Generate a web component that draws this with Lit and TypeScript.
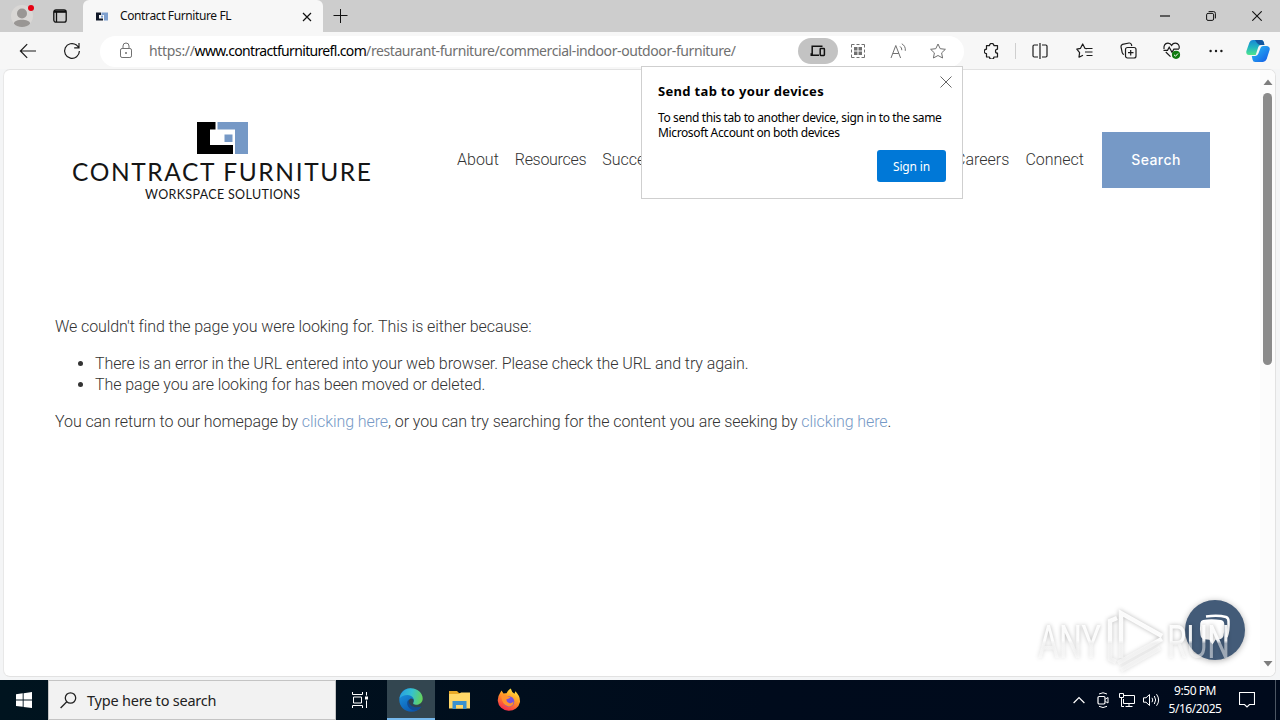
import { LitElement, html, svg, css } from 'lit';
import { customElement } from 'lit/decorators.js';

const icon = (w: number, h: number, content: unknown) => html`
   <svg width="${w}" height="${h}" viewBox="0 0 ${w} ${h}" fill="none" stroke="currentColor">${content}</svg>
`;

const closeIcon = icon(12, 12, svg`<path d="M0.5 0.5L11.5 11.5M11.5 0.5L0.5 11.5"/>`);
const starPath = 'M8 1L10.2 5.7L15.4 6.3L11.6 9.9L12.6 15L8 12.5L3.4 15L4.4 9.9L0.6 6.3L5.8 5.7Z';

@customElement('tab-strip')
export class TabStrip extends LitElement {
   static styles = css`
   :host {
      display: flex;
      height: 32px;
      background-color: #cdcdcd;
      color: #111;
      font: 12px 'Noto Sans', sans-serif;
   }
   svg {
      display: block;
      flex: none;
   }
   .profile {
      width: 83px;
      box-sizing: border-box;
      padding: 4px 0 0 11px;
      display: flex;
      gap: 18px;
   }
   .workspaces {
      margin-top: 5px;
   }
   .tab {
      width: 240px;
      box-sizing: border-box;
      padding: 0 11px 0 12px;
      display: flex;
      align-items: center;
      background-color: #f7f7f7;
      border-radius: 6px 6px 0 0;
   }
   .title {
      flex: 1;
      margin: -1px 0 0 11px;
      letter-spacing: -0.38px;
      white-space: nowrap;
   }
   .tab-close {
      display: flex;
      padding-top: 1px;
   }
   .new-tab {
      padding: 9px 0 0 10px;
      flex: 1;
   }
   .control {
      width: 46px;
      display: flex;
      align-items: center;
      justify-content: center;
   }
`;

   render() {
      return html`
         <div class="profile">
            ${icon(24, 24, svg`
               <circle cx="11" cy="12" r="11" fill="#d9d7d5" stroke="none"/>
               <circle cx="11" cy="9.5" r="5" fill="#999694" stroke="none"/>
               <path d="M3 19.5C3 14.5 19 14.5 19 19.5C17 24 5 24 3 19.5Z" fill="#999694" stroke="none"/>
               <circle cx="20" cy="4" r="3" fill="#e60012" stroke="none"/>
            `)}
            <div class="workspaces">${icon(14, 14, svg`
               <rect x="0.8" y="0.8" width="12.4" height="12.4" rx="2.2" stroke-width="1.3"/>
               <path d="M1 2.6H13" stroke-width="2.4"/>
               <path d="M3.5 3V13" stroke-width="1.3"/>
            `)}</div>
         </div>
         <div class="tab">
            ${icon(14, 9, svg`
               <path d="M1 0.5H6V3H4V6.5H8V8.5H1Z" fill="#101828" stroke="none"/>
               <path d="M6.5 0.5H13V8.5H9V3H6.5Z" fill="#7ea0cf" stroke="none"/>
               <rect x="6" y="3.6" width="2" height="2" fill="#7ea0cf" stroke="none"/>
            `)}
            <span class="title">Contract Furniture FL</span>
            <span class="tab-close">${icon(10, 10, svg`<path d="M1 1L9 9M9 1L1 9" stroke-width="1.2"/>`)}</span>
         </div>
         <div class="new-tab">${icon(15, 14, svg`<path d="M7.5 0V14M0.5 6.5H14.5"/>`)}</div>
         <div class="control">${icon(10, 2, svg`<path d="M0 1H10" stroke-width="1.2"/>`)}</div>
         <div class="control">${icon(10, 10, svg`
            <rect x="0.6" y="2.4" width="7" height="7" rx="1.4"/>
            <path d="M2.6 0.6H7.6Q9.4 0.6 9.4 2.4V7.4"/>
         `)}</div>
         <div class="control">${icon(10, 10, svg`<path d="M0.3 0.3L9.7 9.7M9.7 0.3L0.3 9.7" stroke-width="1.1"/>`)}</div>
      `;
   }
}

@customElement('address-toolbar')
export class AddressToolbar extends LitElement {
   static styles = css`
   :host {
      display: flex;
      align-items: center;
      height: 37px;
      box-sizing: border-box;
      padding-left: 6px;
      background-color: #f7f7f7;
      color: #1b1b1b;
   }
   svg {
      display: block;
   }
   .button {
      width: 44px;
      height: 30px;
      display: flex;
      align-items: center;
      justify-content: center;
      flex: none;
   }
   .address {
      width: 864px;
      height: 31px;
      margin: 1px 6px 0;
      box-sizing: border-box;
      padding: 0 6px 0 19px;
      display: flex;
      align-items: center;
      background-color: #fff;
      border-radius: 16px;
      color: #707070;
      flex: none;
   }
   .url {
      flex: 1;
      margin: -1px 0 0 16px;
      font: 14px 'Noto Sans', sans-serif;
      letter-spacing: -0.41px;
      white-space: nowrap;
   }
   .scheme {
      letter-spacing: -0.33px;
   }
   .domain {
      color: #000;
      letter-spacing: -0.66px;
   }
   .action {
      width: 40px;
      height: 26px;
      display: flex;
      align-items: center;
      justify-content: center;
      border-radius: 13px;
   }
   .action.selected {
      background-color: #c3c3c3;
      color: #111;
   }
   .divider {
      width: 1px;
      height: 16px;
      margin: 0 2px 0 1px;
      background-color: #cfcfcf;
   }
   .copilot {
      width: 40px;
   }
`;

   render() {
      return html`
         <div class="button">${icon(18, 16, svg`<path d="M17 8H1.5M8.2 1.2L1.4 8L8.2 14.8" stroke-width="1.2"/>`)}</div>
         <div class="button">${icon(18, 18, svg`
            <path d="M16.4 9A7.4 7.4 0 1 1 13.5 3.1L15.8 5.3M16 1V5.8H11.2" stroke-width="1.2"/>
         `)}</div>
         <div class="address">
            ${icon(14, 18, svg`
               <rect x="1.5" y="6.5" width="11" height="9" rx="1.6"/>
               <path d="M4 6.3V4A3 3 0 0 1 10 4V6.3"/>
               <circle cx="7" cy="11" r="1" fill="currentColor" stroke="none"/>
            `)}
            <span class="url"><span class="scheme">https://</span><span class="domain">www.contractfurniturefl.com</span>/restaurant-furniture/commercial-indoor-outdoor-furniture/</span>
            <div class="action selected">${icon(16, 12, svg`
               <path d="M12.5 1.2H2.2V9H0.5M0.5 10.2H9" stroke-width="1.5"/>
               <rect x="10.2" y="3.6" width="4.2" height="6.8" rx="0.6" stroke-width="1.5"/>
            `)}</div>
            <div class="action">${icon(16, 16, svg`
               <path d="M4.5 1.500H1.500V4.500M11.500 1.500H14.500V4.500M14.500 11.500V14.500H11.500M4.500 14.500H1.500V11.500M6.500 1.500H9.500M6.500 14.500H9.500M1.500 6.500V9.500M14.500 6.500V9.500"/>
               <path d="M4 4H7.500V7.500H4ZM8.500 4H12V7.500H8.500ZM4 8.500H7.500V12H4ZM8.500 8.500H12V12H8.500Z" fill="currentColor" stroke="none"/>
            `)}</div>
            <div class="action">${icon(17, 16, svg`
               <path d="M1 15L5.8 2.5L10.6 15M2.8 10.500H8.8"/>
               <path d="M10 3.400Q12 4.700 11.800 7.200M11.800 0.800Q15.800 3 15.300 7.800"/>
            `)}</div>
            <div class="action">${icon(16, 16, svg`<path d="${starPath}" stroke-linejoin="round"/>`)}</div>
         </div>
         <div class="button">${icon(16, 16, svg`
            <path d="M2.500 2.600H5.500A2.200 2.200 0 0 1 9.900 2.600H13.500V6.200A2 2 0 0 0 13.500 10.200V14H9.900A2.200 2.200 0 0 1 5.500 14H2.500V10.600A2.200 2.200 0 0 1 2.500 6.200Z" stroke-width="1.2" stroke-linejoin="round"/>
         `)}</div>
         <div class="divider"></div>
         <div class="button">${icon(16, 16, svg`
            <path d="M6 2H2.2Q1 2 1 3.2V12.8Q1 14 2.2 14H6M10 2H13.8Q15 2 15 3.2V12.8Q15 14 13.8 14H10M8 0V16" stroke-width="1.2"/>
         `)}</div>
         <div class="button">${icon(17, 16, svg`
            <path d="M11 5.6L8.9 5.3L6.7 1L4.5 5.3L0.8 6.2L3.6 9.6L3 14.2L7 12.2M10.5 5.5H16.5M9 9H16.5M10.5 12.5H16.5" stroke-width="1.2" stroke-linejoin="round"/>
         `)}</div>
         <div class="button">${icon(17, 17, svg`
            <rect x="5.5" y="5.5" width="10.5" height="10.5" rx="2" stroke-width="1.2"/>
            <path d="M10.7 8V13.5M8 10.7H13.5M4 12.5Q2.6 12 2.2 10.6L1 4.8Q0.8 3 2.5 2.4L9 1Q10.8 0.8 11.4 2.4L11.8 4" stroke-width="1.2"/>
         `)}</div>
         <div class="button">${icon(18, 17, svg`
            <path d="M1 7Q0.4 1.6 4.8 1.2Q7.3 1.1 8.6 3.4Q10 1.1 12.4 1.2Q16.8 1.6 16.2 6.6M2.8 10L7.5 14.6M0.5 8.3H4.5L6.2 5.3L9 10.4L10.9 7.1H16" stroke-width="1.2"/>
            <circle cx="13" cy="12.8" r="4.1" fill="#107c10" stroke="none"/>
            <path d="M11 12.8L12.5 14.2L15 11.5" stroke="#fff"/>
         `)}</div>
         <div class="button">${icon(14, 4, svg`
            <g fill="currentColor" stroke="none"><circle cx="1.6" cy="2" r="1.2"/><circle cx="7" cy="2" r="1.2"/><circle cx="12.4" cy="2" r="1.2"/></g>
         `)}</div>
         <div class="button copilot">${icon(24, 24, svg`
            <defs>
               <linearGradient id="left" x1="0" y1="0" x2="0" y2="1">
                  <stop offset="0" stop-color="#1687d5"/><stop offset="0.5" stop-color="#22b6c0"/><stop offset="1" stop-color="#4ee58c"/>
               </linearGradient>
               <linearGradient id="right" x1="0" y1="0" x2="1" y2="1">
                  <stop offset="0" stop-color="#2bc4f5"/><stop offset="1" stop-color="#1457e6"/>
               </linearGradient>
            </defs>
            <g stroke="none">
               <path d="M7 1H15Q17 1 17.7 3L18.4 6H15Q13 6 12.3 8L9.7 16H3Q-0.4 15.6 0.4 12L3.4 3.4Q4.4 1 7 1Z" fill="url(#left)"/>
               <path d="M9 1H15Q17 1 17.7 3L18.4 6H14Q11.5 5.5 9 1Z" fill="#12569f"/>
               <path d="M17 7H20.5Q24.5 7.6 23.6 11L20.7 20Q19.5 23 17 23H9.2Q7 23 6.5 20.5L5.8 17H9.2Q11.6 17 12.4 14.6L14.6 8.8Q15.3 7 17 7Z" fill="url(#right)"/>
            </g>
         `)}</div>
      `;
   }
}

@customElement('send-tab-popup')
export class SendTabPopup extends LitElement {
   static styles = css`
   :host {
      width: 322px;
      height: 133px;
      box-sizing: border-box;
      padding: 16px;
      border: 1px solid #cfcfcf;
      background-color: #fff;
      color: #000;
      font: 12px/15px 'Noto Sans', sans-serif;
      display: flex;
      flex-direction: column;
   }
   .title {
      font-weight: 700;
      font-size: 13px;
      line-height: 17px;
      letter-spacing: 0.32px;
   }
   .message {
      margin-top: 10px;
      letter-spacing: -0.37px;
      white-space: nowrap;
   }
   .sign-in {
      align-self: flex-end;
      margin-top: 10px;
      width: 69px;
      height: 32px;
      padding: 0;
      border: none;
      border-radius: 3px;
      background-color: #0078d7;
      color: #fff;
      font: 12px 'Noto Sans', sans-serif;
      letter-spacing: -0.15px;
   }
   .close {
      position: absolute;
      top: 9px;
      right: 10px;
      color: #666;
   }
   svg {
      display: block;
   }
`;

   render() {
      return html`
         <div class="title">Send tab to your devices</div>
         <div class="message">To send this tab to another device, sign in to the same<br>Microsoft Account on both devices</div>
         <button class="sign-in">Sign in</button>
         <div class="close">${closeIcon}</div>
      `;
   }
}

@customElement('web-page')
export class WebPage extends LitElement {
   static styles = css`
   :host {
      display: flex;
      height: 608px;
      margin: 0 4px 0 3px;
      box-sizing: border-box;
      border: 1px solid #e2e2e2;
      border-left-color: #e8e8e8;
      border-radius: 7px;
      background-color: #fff;
      overflow: hidden;
      font: 300 16px/21px Roboto, sans-serif;
      color: #333;
   }
   .content {
      width: 1257px;
   }
   .header {
      display: flex;
      align-items: flex-start;
      height: 180px;
      padding-top: 49px;
   }
   .logo {
      display: block;
      margin-left: 66px;
   }
   .nav {
      display: flex;
      align-items: center;
      height: 54px;
      width: 645px;
      margin: 13px 0 0 83px;
      white-space: nowrap;
   }
   .nav-item {
      margin-right: 16px;
   }
   .resources {
      letter-spacing: -0.3px;
   }
   .connect {
      margin-right: 18px;
   }
   .gap {
      flex: 1;
   }
   .search {
      width: 108px;
      height: 56px;
      margin-top: 13px;
      padding-bottom: 1px;
      box-sizing: border-box;
      display: flex;
      align-items: center;
      justify-content: center;
      background-color: #7699c6;
      color: #fff;
      font: 500 14px Inter, sans-serif;
      letter-spacing: 0.4px;
   }
   .text {
      margin: 17px 0 0 51px;
      white-space: nowrap;
      letter-spacing: -0.085px;
   }
   p {
      margin: 0 0 16px;
   }
   ul {
      margin: 0 0 16px;
      padding-left: 40px;
   }
   a {
      color: #7699c6;
   }
   .scrollbar {
      width: 15px;
      display: flex;
      flex-direction: column;
      align-items: center;
      background-color: #fcfcfc;
      color: #7d7d7d;
   }
   .arrow {
      display: block;
      margin: 9px 0 7px;
   }
   .arrow.down {
      margin-bottom: 9px;
   }
   .thumb {
      width: 9px;
      height: 272px;
      border-radius: 5px;
      background-color: #8b8b8b;
      flex: none;
   }
   .track {
      flex: 1;
   }
`;

   render() {
      return html`
         <div class="content">
            <div class="header">
               <svg class="logo" width="304" height="84" viewBox="0 0 304 84" font-family="Lato, sans-serif" font-weight="400" fill="#151515">
                  <path d="M127 3H145.500V10.500H140V26H163V35H127Z" fill="#000"/>
                  <path d="M147.500 3H178V35H165V10.500H147.500Z" fill="#7699c6"/>
                  <rect x="154.500" y="15.500" width="8" height="7.500" fill="#7699c6"/>
                  <text x="2" y="61.500" font-size="24.500" textLength="299">CONTRACT FURNITURE</text>
                  <text x="75" y="80" font-size="12.500" textLength="155">WORKSPACE SOLUTIONS</text>
               </svg>
               <div class="nav">
                  <span class="nav-item">About</span>
                  <span class="nav-item resources">Resources</span>
                  <span class="nav-item">Success</span>
                  <span class="gap"></span>
                  <span class="nav-item">Careers</span>
                  <span class="connect">Connect</span>
               </div>
               <div class="search">Search</div>
            </div>
            <div class="text">
               <p>We couldn't find the page you were looking for. This is either because:</p>
               <ul>
                  <li>There is an error in the URL entered into your web browser. Please check the URL and try again.</li>
                  <li>The page you are looking for has been moved or deleted.</li>
               </ul>
               <p>You can return to our homepage by <a>clicking here</a>, or you can try searching for the content you are seeking by <a>clicking here</a>.</p>
            </div>
         </div>
         <div class="scrollbar">
            <svg class="arrow" width="10" height="7"><path d="M0.500 6L5 0.500L9.500 6Z" fill="currentColor"/></svg>
            <div class="thumb"></div>
            <div class="track"></div>
            <svg class="arrow down" width="10" height="7"><path d="M0.500 1L5 6.500L9.500 1Z" fill="currentColor"/></svg>
         </div>
      `;
   }
}

@customElement('task-bar')
export class TaskBar extends LitElement {
   static styles = css`
   :host {
      display: flex;
      height: 40px;
      background: linear-gradient(90deg, #00141f, #000b1c 60%, #000a1c);
      color: #fff;
      font: 12px 'Noto Sans', sans-serif;
   }
   svg {
      display: block;
   }
   .item {
      width: 48px;
      margin-right: 1px;
      display: flex;
      align-items: center;
      justify-content: center;
      flex: none;
   }
   .start {
      margin: 0;
   }
   .search {
      width: 288px;
      box-sizing: border-box;
      padding-left: 11px;
      border: 1px solid #c4c4c4;
      background-color: #f2f2f2;
      display: flex;
      align-items: center;
      gap: 10px;
      color: #222;
      font-size: 14.5px;
      letter-spacing: -0.22px;
   }
   .task-view {
      margin-right: 3px;
   }
   .active {
      box-sizing: border-box;
      padding-top: 2px;
      background-color: #334650;
      border-bottom: 2px solid #76b9ed;
   }
   .explorer {
      padding-right: 1px;
      box-sizing: border-box;
   }
   .spacer {
      flex: 1;
   }
   .tray {
      width: 24px;
      display: flex;
      align-items: center;
      justify-content: center;
   }
   .clock {
      width: 64px;
      display: flex;
      flex-direction: column;
      text-align: center;
      line-height: 18px;
      padding-top: 2px;
      letter-spacing: -0.45px;
   }
   .notifications {
      width: 40px;
      display: flex;
      align-items: center;
      justify-content: center;
   }
   .show-desktop {
      width: 4px;
      margin-left: 8px;
      border-left: 1px solid #4c5663;
   }
`;

   render() {
      return html`
         <div class="item start">${icon(16, 16, svg`
            <path d="M0 2.2L6.7 1.3V7.6H0ZM7.6 1.2L16 0V7.6H7.6ZM0 8.5H6.7V14.8L0 13.9ZM7.6 8.5H16V16L7.6 14.9Z" fill="#fff" stroke="none"/>
         `)}</div>
         <div class="search">
            ${icon(17, 17, svg`<circle cx="10.5" cy="6" r="5.2" stroke-width="1.3"/><path d="M6.8 9.7L0.6 16" stroke-width="1.3"/>`)}
            <span>Type here to search</span>
         </div>
         <div class="item task-view">${icon(16, 16, svg`
            <path d="M0.5 0V2.5H10.5V0M0.5 16V13.5H10.5V16M1.5 5H9.5V11H1.5ZM14.5 0V3.5M14.5 8.5V16"/>
            <rect x="13" y="4.5" width="3" height="3" fill="#fff" stroke="none"/>
         `)}</div>
         <div class="item active">${icon(24, 24, svg`
            <defs>
               <linearGradient id="top" x1="0" y1="0.3" x2="1" y2="0.5">
                  <stop offset="0" stop-color="#289fe0"/><stop offset="0.5" stop-color="#35c1d0"/><stop offset="1" stop-color="#65d35a"/>
               </linearGradient>
               <linearGradient id="wave" x1="0" y1="0" x2="0.6" y2="1">
                  <stop offset="0" stop-color="#1d9ce5"/><stop offset="1" stop-color="#0b58b0"/>
               </linearGradient>
            </defs>
            <g stroke="none">
               <path d="M0.3 12C0.3 5 5 0.3 12 0.3L16 12L15 17L22.300 18.500C20 22 16.500 23.700 12.500 23.700C5.500 23.700 0.300 18.500 0.300 12Z" fill="url(#wave)"/>
               <path d="M0.5 10.5C2 3.500 7 0.300 12 0.300C19 0.300 23.700 5.500 23.700 10.500C23.700 14.500 20.500 16.800 17 16.800C14.500 16.800 13.500 15.800 14.200 14.800C16.500 11 13 7 8.500 7C5 7 2 8.500 0.500 10.500Z" fill="url(#top)"/>
               <path d="M9.500 11.500C6 16 10 22.500 17 22.500C19.500 22 21.500 20 22.300 18.500C17 20.500 10.500 18 9.500 11.500Z" fill="#124b93"/>
               <path d="M14.200 14.800C13.500 16 15.500 17.500 18 17.300C20.500 17.200 22 16 23 14.800L22.300 18.500C17 20.500 11 18.500 9.700 14C9.500 11 12 9.500 14.500 11.500Q15 13 14.200 14.800Z" fill="#30444e"/>
            </g>
         `)}</div>
         <div class="item explorer">${icon(21, 18, svg`
            <g stroke="none">
               <path d="M0 0H8L10 2H21V17H0Z" fill="#e8a928"/>
               <path d="M0 3H10L12 1.500H21V17.500H0Z" fill="#ffd768"/>
               <path d="M3.5 10H17.500V18H14V14H7V18H3.500Z" fill="#3b91cd"/>
               <rect x="7" y="14" width="7" height="3.5" fill="#ffd768"/>
            </g>
         `)}</div>
         <div class="item">${icon(24, 24, svg`
            <defs>
               <linearGradient id="fire" x1="0.8" y1="0" x2="0.3" y2="1">
                  <stop offset="0" stop-color="#fff044"/><stop offset="0.45" stop-color="#ff9a24"/><stop offset="1" stop-color="#f5264e"/>
               </linearGradient>
            </defs>
            <g stroke="none">
               <path d="M2.8 5.5L4.5 2.5L6.5 5.5Q8 5 9.5 5.2Q11 2 13.8 0.500Q14.500 4 17.500 5.800L18.300 3.300Q23.400 8 23 14A11.200 10.500 0 0 1 0.800 13Q0.500 8.500 2.800 5.500Z" fill="url(#fire)"/>
               <circle cx="12" cy="13.5" r="5.3" fill="#7452dd"/>
               <path d="M4 7Q8 5.500 11 8.500L13.500 9Q12 11 9.500 11.300Q9 14 12 15Q14.500 15.800 16.500 13.500Q16.500 18.500 11.500 18.500Q5 17.500 4 7Z" fill="#ff922d"/>
            </g>
         `)}</div>
         <div class="spacer"></div>
         <div class="tray">${icon(12, 8, svg`<path d="M0.6 7L6 1.5L11.4 7" stroke-width="1.2"/>`)}</div>
         <div class="tray">${icon(12, 16, svg`
            <rect x="1" y="4.5" width="7" height="7.5" rx="1.2" stroke-width="1.2"/>
            <path d="M8.5 7L11 5.5V11L8.5 9.5M2 2Q6 -0.5 10 2M2 14.3Q6 16.8 10 14.3"/>
         `)}</div>
         <div class="tray">${icon(16, 14, svg`
            <path d="M5 2.5H15.5V10.5H4.5V6M10 10.5V13.5M6.5 13.5H13.5M0.5 0.5H4.5V4.5H0.5ZM2.5 4.5V13.5H5"/>
         `)}</div>
         <div class="tray">${icon(17, 14, svg`
            <path d="M0.5 4.8H3L6.5 1.5V12.5L3 9.2H0.5ZM9 4.8Q10.5 7 9 9.2M11.3 3Q14 7 11.3 11M13.5 1.2Q17.8 7 13.5 12.8"/>
         `)}</div>
         <div class="clock"><span>9:50 PM</span><span>5/16/2025</span></div>
         <div class="notifications">${icon(16, 16, svg`<path d="M0.5 0.5H15.5V12.5H10.5L8 15L5.5 12.5H0.5Z" stroke-width="1.1"/>`)}</div>
         <div class="show-desktop"></div>
      `;
   }
}

@customElement('app-root')
export class AppRoot extends LitElement {
   static styles = css`
   :host {
      display: flex;
      flex-direction: column;
      position: relative;
      width: 1280px;
      height: 720px;
      overflow: hidden;
      background-color: #f4f5f6;
   }
   task-bar {
      margin-top: 3px;
   }
   .popup {
      position: absolute;
      left: 641px;
      top: 66px;
   }
   .chat {
      position: absolute;
      left: 1185px;
      top: 600px;
      width: 60px;
      height: 60px;
      border-radius: 50%;
      background-color: #435b78;
      box-shadow: 0 1px 6px rgba(0, 0, 0, 0.3);
   }
   .watermark {
      position: absolute;
      left: 1030px;
      top: 604px;
      filter: drop-shadow(0 0 2px rgba(0, 0, 0, 0.3));
   }
`;

   render() {
      return html`
         <tab-strip></tab-strip>
         <address-toolbar></address-toolbar>
         <web-page></web-page>
         <task-bar></task-bar>
         <send-tab-popup class="popup"></send-tab-popup>
         <div class="chat">
            <svg width="60" height="60" fill="none">
               <path d="M21 16.5Q33 14.8 41 17Q43.5 18 43.5 21Q44 30 41.5 37" stroke="#fff" stroke-width="2.5"/>
               <path d="M18 20Q26 18.5 36 20Q39 20.5 39.3 24Q39.5 31 38.5 36Q37.5 39 34 39.3L30.5 39.7L27.5 44.5L24.5 39.8L19.5 39.3Q16 39 15.5 35Q14.5 29 15.3 23Q15.7 20.5 18 20Z" fill="#fff"/>
            </svg>
         </div>
         <svg class="watermark" width="210" height="76" fill="none">
            <defs>
               <linearGradient id="fade" gradientUnits="userSpaceOnUse" x1="0" y1="0" x2="0" y2="76">
                  <stop offset="0.48" stop-color="#fff" stop-opacity="0.92"/>
                  <stop offset="0.52" stop-color="#fff" stop-opacity="0.5"/>
               </linearGradient>
            </defs>
            <g font-family="Roboto, sans-serif" font-size="47" fill="url(#fade)">
               <text x="8" y="54" textLength="63" lengthAdjust="spacingAndGlyphs">ANY</text>
               <text x="137" y="54" textLength="63" lengthAdjust="spacingAndGlyphs">RUN</text>
            </g>
            <path d="M87 14L80 17V55L86 58M91 54V9L132 32M88 59L132 35M91 66L130 44" stroke="url(#fade)" stroke-width="4.5"/>
         </svg>
      `;
   }
}
